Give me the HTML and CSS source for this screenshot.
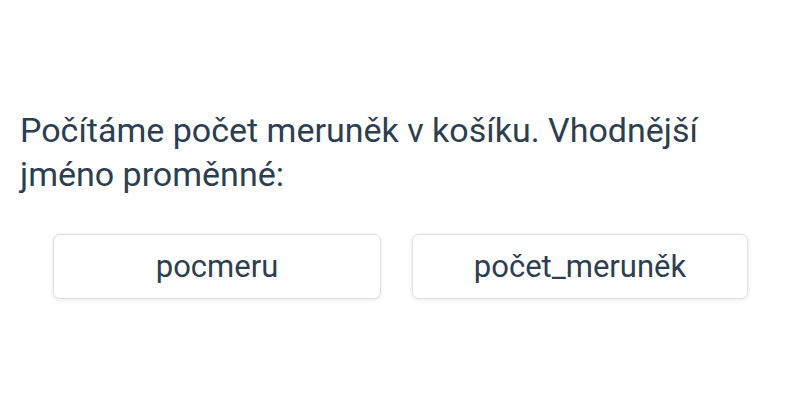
FILE: index.html
```html
<!DOCTYPE html>
<html lang="cs">
<head>
<meta charset="utf-8">
<link rel="stylesheet" href="styles.css">
</head>
<body>
<main class="quiz">
  <p class="question">Počítáme počet meruněk v košíku. Vhodnější jméno proměnné:</p>
  <div class="options">
    <button class="option option-a">pocmeru</button>
    <button class="option option-b">počet_meruněk</button>
  </div>
</main>
</body>
</html>
```
FILE: styles.css
```css
html, body {
  margin: 0;
  padding: 0;
  background: #ffffff;
}
body {
  width: 800px;
  height: 400px;
  font-family: Roboto, "Noto Sans", sans-serif;
  color: #2c3e50;
}
.quiz {
  padding: 108px 20px 0 20px;
}
.question {
  margin: 0;
  font-size: 34px;
  line-height: 44px;
  width: 720px;
}
.options {
  display: flex;
  gap: 31px;
  margin-top: 38px;
  padding-left: 33px;
}
.option {
  height: 65px;
  background: #ffffff;
  border: 1px solid #e0e0e0;
  border-radius: 7px;
  box-shadow: 0 1px 4px rgba(0,0,0,0.1);
  font-family: Roboto, "Noto Sans", sans-serif;
  font-size: 31px;
  color: #2c3e50;
  padding: 0;
}
.option-a { width: 328px; }
.option-b { width: 336px; }
```
